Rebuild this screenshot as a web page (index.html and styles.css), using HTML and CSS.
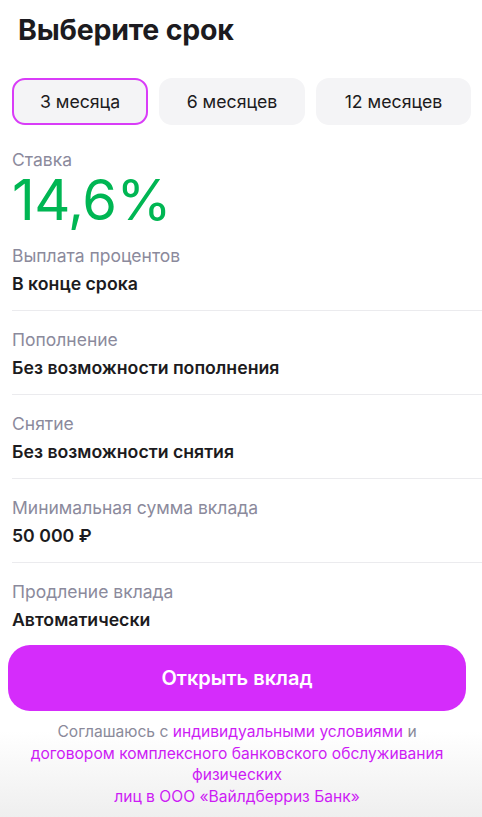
FILE: index.html
```html
<!DOCTYPE html>
<html lang="ru">
<head>
    <meta charset="UTF-8">
    <meta name="viewport" content="width=device-width, initial-scale=1.0">
    <title>Выберите срок</title>
    <link rel="stylesheet" href="styles.css">
</head>
<body>

    <h1 class="page-title">Выберите срок</h1>

    <div class="term-tabs">
        <button class="term-tab active">3 месяца</button>
        <button class="term-tab">6 месяцев</button>
        <button class="term-tab">12 месяцев</button>
    </div>

    <div class="rate">
        <div class="info-label">Ставка</div>
        <div class="rate-value">14,6%</div>
    </div>

    <div class="info-row">
        <div class="info-label">Выплата процентов</div>
        <div class="info-value">В конце срока</div>
    </div>
    <div class="info-row">
        <div class="info-label">Пополнение</div>
        <div class="info-value">Без возможности пополнения</div>
    </div>
    <div class="info-row">
        <div class="info-label">Снятие</div>
        <div class="info-value">Без возможности снятия</div>
    </div>
    <div class="info-row">
        <div class="info-label">Минимальная сумма вклада</div>
        <div class="info-value">50 000 ₽</div>
    </div>
    <div class="info-row last">
        <div class="info-label">Продление вклада</div>
        <div class="info-value">Автоматически</div>
    </div>

    <div class="bottom-block">
        <button class="open-button">Открыть вклад</button>
        <p class="agreement">
            Соглашаюсь с <a href="#">индивидуальными условиями</a> и<br>
            <a href="#">договором комплексного банковского обслуживания физических<br>лиц в ООО «Вайлдберриз Банк»</a>
        </p>
    </div>

</body>
</html>
```

FILE: styles.css
```css
body {
    margin: 0;
    font-family: Inter, "Noto Sans", sans-serif;
    color: #1c1b20;
    background: #fff;
    overflow: hidden;
}

.page-title {
    margin: 0;
    padding: 12px 18px 0;
    font-size: 28.5px;
    font-weight: 700;
    line-height: 36px;
    letter-spacing: -0.2px;
}

.term-tabs {
    display: flex;
    gap: 11px;
    padding: 30px 11px 0 12px;
}

.term-tab {
    flex: 1 1 0;
    height: 47px;
    border: 2px solid transparent;
    border-radius: 13px;
    background: #f4f4f6;
    font-family: inherit;
    font-size: 17.7px;
    color: #1c1b20;
}

.term-tab:first-child {
    flex: 0 0 136px;
}

.term-tab:last-child {
    flex: 0 0 155px;
}

.term-tab.active {
    border-color: #d93cf8;
}

.rate {
    padding: 24px 0 0 12px;
}

.rate-value {
    font-size: 56px;
    line-height: 58px;
    font-weight: 400;
    color: #00b653;
    letter-spacing: -0.5px;
    margin-top: 0;
}

.info-label {
    font-size: 17.5px;
    line-height: 22px;
    color: #8b8a9c;
}

.info-row {
    margin-left: 12px;
    padding: 18px 0 15px;
    border-bottom: 1px solid #ebebee;
}

.rate + .info-row {
    padding-top: 16px;
}

.info-row.last {
    border-bottom: none;
    padding-bottom: 0;
}

.info-value {
    margin-top: 6px;
    font-size: 17.7px;
    line-height: 22px;
    font-weight: 600;
}

.bottom-block {
    padding: 14px 16px 30px 8px;
    background: linear-gradient(to bottom, #fff 0, #fff 100px, #ebebeb 100%);
}

.open-button {
    display: block;
    width: 100%;
    height: 66px;
    border: none;
    border-radius: 22px;
    background: #d52cfb;
    color: #fff;
    font-family: inherit;
    font-size: 20px;
    font-weight: 600;
}

.agreement {
    margin: 10px 0 0;
    text-align: center;
    font-size: 15.6px;
    line-height: 21.5px;
    color: #8a8a9a;
}

.agreement a {
    color: #cd1cf5;
    text-decoration: none;
}
```
